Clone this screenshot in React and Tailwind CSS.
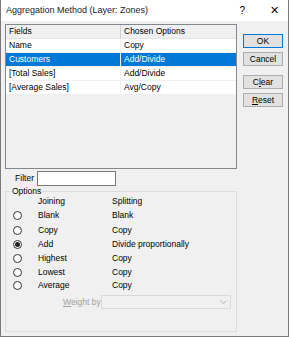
import React from "react";

const rows = [
  { field: "Name", option: "Copy" },
  { field: "Customers", option: "Add/Divide", selected: true },
  { field: "[Total Sales]", option: "Add/Divide" },
  { field: "[Average Sales]", option: "Avg/Copy" },
];

const choices = [
  { join: "Blank", split: "Blank", cls: "h-[15px]" },
  { join: "Copy", split: "Copy", cls: "h-[14px]" },
  { join: "Add", split: "Divide proportionally", checked: true, cls: "h-[14px]" },
  { join: "Highest", split: "Copy", cls: "h-[14px]" },
  { join: "Lowest", split: "Copy", cls: "h-[14px]" },
  { join: "Average", split: "Copy", cls: "h-[13px]" },
];

function Radio({ checked }) {
  return (
    <span className="w-[9px] h-[9px] rounded-full border border-[#333] bg-white flex items-center justify-center">
      {checked && <span className="w-[5px] h-[5px] rounded-full bg-[#222]" />}
    </span>
  );
}

function Button({ children, primary, className = "" }) {
  return (
    <div
      className={
        "h-[14px] w-[40px] flex items-center justify-center bg-[#e1e1e1] border " +
        (primary ? "border-[#0078d7]" : "border-[#adadad]") +
        " " +
        className
      }
    >
      {children}
    </div>
  );
}

export default function App() {
  return (
    <div
      className="w-[289px] h-[337px] bg-[#f0f0f0] text-[8.5px] leading-none text-black overflow-hidden border-l border-r border-b border-[#7a7a7a] flex flex-col"
      style={{ fontFamily: '"Liberation Sans", Arial, sans-serif' }}
    >
      {/* title bar */}
      <div className="h-[21px] bg-white flex items-center pl-[5px] shrink-0">
        <span className="text-[9px] text-[#1a1a1a]">Aggregation Method (Layer: Zones)</span>
        <span className="ml-auto text-[10px] mr-[25px]">?</span>
        <span className="text-[11px] font-light mr-[9px]">✕</span>
      </div>

      <div className="flex pt-[3px]">
        {/* left column */}
        <div className="ml-[4px] w-[232px] flex flex-col">
          <div className="h-[145px] border border-[#828790] bg-[#f0f0f0] flex flex-col">
            <div className="h-[14px] flex border-b border-[#e5e5e5] bg-[#f0f0f0]">
              <div className="w-[115px] border-r border-[#d0d0d0] pl-[3px] flex items-center">Fields</div>
              <div className="flex-1 pl-[3px] flex items-center">Chosen Options</div>
            </div>
            {rows.map((r) => (
              <div
                key={r.field}
                className={
                  "h-[14px] flex border-b border-[#f0f0f0] " +
                  (r.selected ? "bg-[#0078d7] text-white" : "bg-white")
                }
              >
                <div className="w-[115px] border-r border-[#f0f0f0] pl-[3px] flex items-center">{r.field}</div>
                <div className="flex-1 pl-[3px] flex items-center">{r.option}</div>
              </div>
            ))}
          </div>

          {/* filter */}
          <div className="flex items-center mt-[2px] h-[15px]">
            <span className="w-[31px] text-right pr-[2px]">Filter</span>
            <div className="ml-[1px] w-[79px] h-[15px] bg-white border border-[#7a7a7a]" />
          </div>

          {/* options group */}
          <div className="relative mt-[5px] h-[141px] border border-[#dcdcdc]">
            <span className="absolute -top-[5px] left-[5px] bg-[#f0f0f0] px-[1px]">Options</span>
            <div className="flex flex-col pt-[2px]">
              <div className="h-[14px] flex items-center">
                <span className="ml-[32px] w-[74px]">Joining</span>
                <span>Splitting</span>
              </div>
              {choices.map((c) => (
                <div key={c.join} className={"flex items-center " + c.cls}>
                  <span className="ml-[7px] w-[25px]">
                    <Radio checked={c.checked} />
                  </span>
                  <span className="w-[74px]">{c.join}</span>
                  <span>{c.split}</span>
                </div>
              ))}
              <div className="flex items-center mt-[3px] h-[14px]">
                <span className="ml-[57px] w-[38px] text-[#a0a0a0]">
                  <span className="underline">W</span>eight by
                </span>
                <div className="w-[130px] h-[14px] border border-[#d9d9d9] bg-[#f0f0f0] flex items-center justify-end pr-[3px]">
                  <svg width="7" height="5" viewBox="0 0 7 5">
                    <path d="M0.5 0.5 L3.5 3.5 L6.5 0.5" stroke="#b0b0b0" fill="none" strokeWidth="1" />
                  </svg>
                </div>
              </div>
            </div>
          </div>
        </div>

        {/* buttons */}
        <div className="ml-[6px] flex flex-col pt-[10px]">
          <Button primary>OK</Button>
          <Button className="mt-[4px]">Cancel</Button>
          <Button className="mt-[9px]">
            <span>
              C<span className="underline">l</span>ear
            </span>
          </Button>
          <Button className="mt-[4px]">
            <span>
              <span className="underline">R</span>eset
            </span>
          </Button>
        </div>
      </div>
    </div>
  );
}
